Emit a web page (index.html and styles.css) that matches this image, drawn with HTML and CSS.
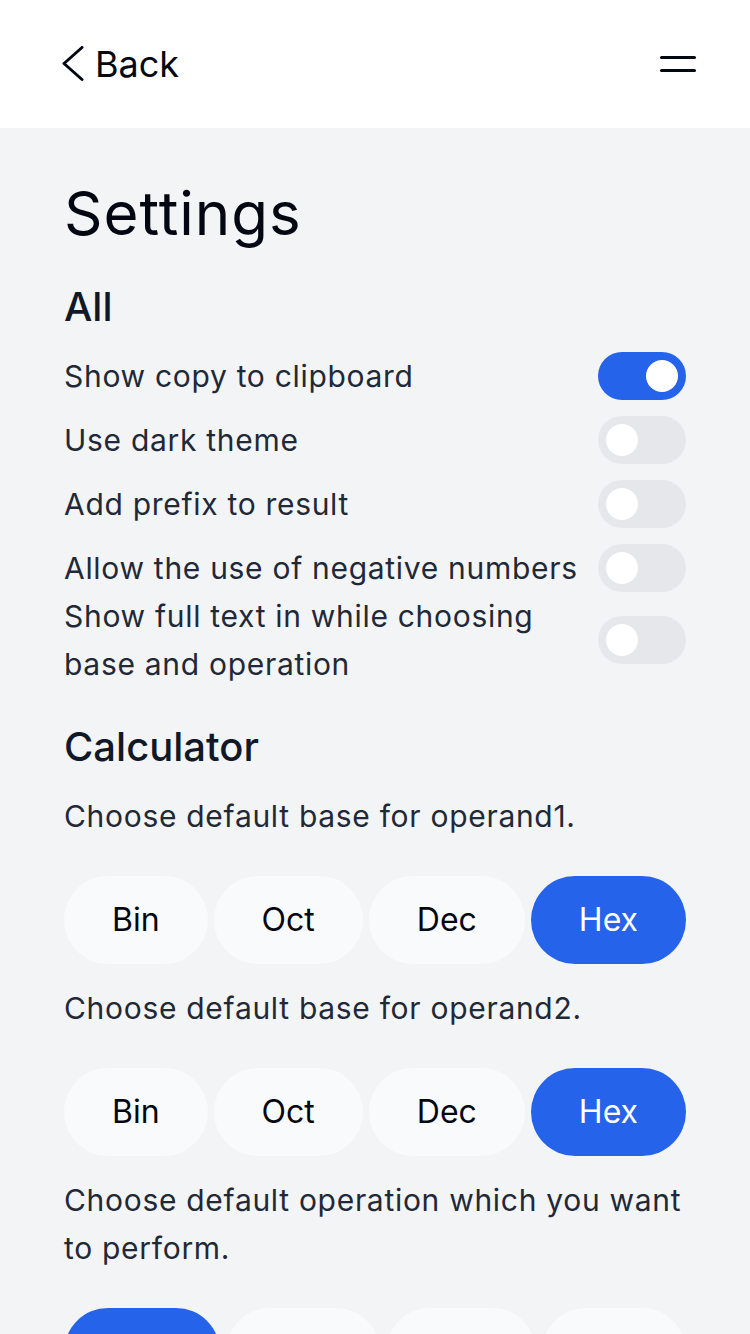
FILE: index.html
```html
<!DOCTYPE html>
<html lang="en">
<head>
<meta charset="utf-8">
<title>Settings</title>
<link rel="stylesheet" href="styles.css">
</head>
<body>
<header class="topbar">
  <a class="back" href="#">
    <svg class="back-icon" width="22" height="36" viewBox="0 0 22 36" aria-hidden="true">
      <polyline points="20,1.5 2,17.5 20,33.5" fill="none" stroke="#030712" stroke-width="3" stroke-linecap="round" stroke-linejoin="round"/>
    </svg>
    <span>Back</span>
  </a>
  <button class="menu" aria-label="Menu"><span class="menu-line"></span><span class="menu-line"></span></button>
</header>

<main class="page">
  <h1 class="title">Settings</h1>

  <section class="group">
    <h2 class="group-title">All</h2>
    <ul class="options">
      <li class="option"><span class="option-label">Show copy to clipboard</span><span class="switch switch--on"><span class="knob"></span></span></li>
      <li class="option"><span class="option-label">Use dark theme</span><span class="switch"><span class="knob"></span></span></li>
      <li class="option"><span class="option-label">Add prefix to result</span><span class="switch"><span class="knob"></span></span></li>
      <li class="option option--flush"><span class="option-label">Allow the use of negative numbers</span><span class="switch"><span class="knob"></span></span></li>
      <li class="option"><span class="option-label">Show full text in while choosing base and operation</span><span class="switch"><span class="knob"></span></span></li>
    </ul>
  </section>

  <section class="group">
    <h2 class="group-title">Calculator</h2>
    <p class="prompt">Choose default base for operand1.</p>
    <div class="choices">
      <button class="choice">Bin</button>
      <button class="choice">Oct</button>
      <button class="choice">Dec</button>
      <button class="choice choice--active">Hex</button>
    </div>
    <p class="prompt">Choose default base for operand2.</p>
    <div class="choices">
      <button class="choice">Bin</button>
      <button class="choice">Oct</button>
      <button class="choice">Dec</button>
      <button class="choice choice--active">Hex</button>
    </div>
    <p class="prompt">Choose default operation which you want to perform.</p>
    <div class="choices">
      <button class="choice choice--active">Add</button>
      <button class="choice">Sub</button>
      <button class="choice">Mul</button>
      <button class="choice">Div</button>
    </div>
  </section>
</main>
</body>
</html>
```
FILE: styles.css
```css
* { box-sizing: border-box; }

html, body {
  margin: 0;
  padding: 0;
}

body {
  background: #f3f4f6;
  font-family: Inter, "Noto Sans", sans-serif;
  color: #1f2937;
}

.topbar {
  height: 128px;
  background: #ffffff;
  display: flex;
  align-items: center;
  justify-content: space-between;
  padding: 0 54px 0 62px;
}

.back {
  display: flex;
  align-items: center;
  gap: 11px;
  text-decoration: none;
  color: #030712;
  font-size: 36px;
  line-height: 48px;
}

.back-icon { display: block; }

.menu {
  display: flex;
  flex-direction: column;
  gap: 10px;
  padding: 0;
  border: 0;
  background: transparent;
}

.menu-line {
  display: block;
  width: 36px;
  height: 3px;
  border-radius: 2px;
  background: #030712;
}

.page {
  padding: 49px 64px 0 64px;
}

.title {
  margin: 0;
  font-size: 60px;
  line-height: 72px;
  font-weight: 400;
  letter-spacing: 1px;
  color: #030712;
}

.group-title {
  margin: 34px 0 21px 0;
  font-size: 40px;
  line-height: 48px;
  font-weight: 500;
  color: #111827;
}

.group + .group .group-title { margin-top: 35px; }

.options {
  list-style: none;
  margin: 0;
  padding: 0;
}

.option {
  display: flex;
  align-items: center;
  gap: 16px;
  margin-bottom: 16px;
}

.option--flush { margin-bottom: 0; }
.option:last-child { margin-bottom: 0; }

.option-label {
  flex: 1;
  font-size: 30px;
  line-height: 48px;
  letter-spacing: 0.7px;
  color: #1f2937;
}

.switch {
  flex: none;
  width: 88px;
  height: 48px;
  border-radius: 24px;
  background: #e5e7eb;
  padding: 8px;
  display: flex;
  justify-content: flex-start;
}

.switch--on {
  background: #2563eb;
  justify-content: flex-end;
}

.knob {
  width: 32px;
  height: 32px;
  border-radius: 50%;
  background: #ffffff;
}

.prompt {
  margin: 0 0 36px 0;
  font-size: 30px;
  line-height: 48px;
  letter-spacing: 0.7px;
  color: #1f2937;
}

.choices {
  display: flex;
  gap: 6px;
  margin-bottom: 20px;
}

.choice {
  flex: 1 1 auto;
  height: 88px;
  padding: 0 40px;
  border: 0;
  border-radius: 44px;
  background: #f9fafb;
  color: #030712;
  font-family: Inter, "Noto Sans", sans-serif;
  font-size: 32px;
  line-height: 40px;
}

.choice--active {
  background: #2563eb;
  color: #ffffff;
}
```
